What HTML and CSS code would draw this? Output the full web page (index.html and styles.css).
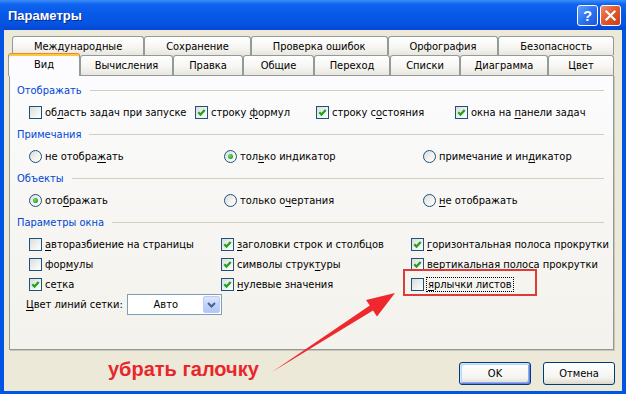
FILE: index.html
```html
<!DOCTYPE html>
<html lang="ru">
<head>
    <meta charset="UTF-8">
    <title>Параметры</title>
    <link rel="stylesheet" href="styles.css">
</head>
<body>
    <div class="window">
        <!-- Заголовок окна -->
        <div class="titlebar">
            <span class="title">Параметры</span>
            <div class="caption-buttons">
                <span class="cap-btn help">?</span>
                <span class="cap-btn close">
                    <svg viewBox="0 0 21 21" width="21" height="21"><path d="M6 6 L15 15 M15 6 L6 15" stroke="#fff" stroke-width="2.4" stroke-linecap="square"/></svg>
                </span>
            </div>
        </div>

        <div class="client">
            <!-- Вкладки -->
            <div class="tabs">
                <div class="tab-row back">
                    <span class="tab">Международные</span>
                    <span class="tab">Сохранение</span>
                    <span class="tab">Проверка ошибок</span>
                    <span class="tab">Орфография</span>
                    <span class="tab">Безопасность</span>
                </div>
                <div class="tab-row front">
                    <span class="tab active">Вид</span>
                    <span class="tab">Вычисления</span>
                    <span class="tab">Правка</span>
                    <span class="tab">Общие</span>
                    <span class="tab">Переход</span>
                    <span class="tab">Списки</span>
                    <span class="tab">Диаграмма</span>
                    <span class="tab">Цвет</span>
                </div>
            </div>

            <div class="panel">
                <div class="group-title"><span>Отображать</span></div>
                <div class="row cols-show">
                    <label class="opt"><span class="cb"></span><span>об<u>л</u>асть задач при запуске</span></label>
                    <label class="opt"><span class="cb on"><svg viewBox="0 0 11 11"><polyline points="2.3,5.2 4.5,7.6 8.7,3"/></svg></span><span>строку <u>ф</u>ормул</span></label>
                    <label class="opt"><span class="cb on"><svg viewBox="0 0 11 11"><polyline points="2.3,5.2 4.5,7.6 8.7,3"/></svg></span><span>строку с<u>о</u>стояния</span></label>
                    <label class="opt"><span class="cb on"><svg viewBox="0 0 11 11"><polyline points="2.3,5.2 4.5,7.6 8.7,3"/></svg></span><span>окна на <u>п</u>анели задач</span></label>
                </div>

                <div class="group-title"><span>Примечания</span></div>
                <div class="row cols-radio">
                    <label class="opt"><span class="rb"></span><span>не отобра<u>ж</u>ать</span></label>
                    <label class="opt"><span class="rb on"></span><span>тол<u>ь</u>ко индикатор</span></label>
                    <label class="opt"><span class="rb"></span><span>примечание и ин<u>д</u>икатор</span></label>
                </div>

                <div class="group-title"><span>Объекты</span></div>
                <div class="row cols-radio">
                    <label class="opt"><span class="rb on"></span><span>ото<u>б</u>ражать</span></label>
                    <label class="opt"><span class="rb"></span><span>только о<u>ч</u>ертания</span></label>
                    <label class="opt"><span class="rb"></span><span><u>н</u>е отображать</span></label>
                </div>

                <div class="group-title"><span>Параметры окна</span></div>
                <div class="grid cols-window">
                    <label class="opt"><span class="cb"></span><span><u>а</u>вторазбиение на страницы</span></label>
                    <label class="opt"><span class="cb on"><svg viewBox="0 0 11 11"><polyline points="2.3,5.2 4.5,7.6 8.7,3"/></svg></span><span><u>з</u>аголовки строк и столбцов</span></label>
                    <label class="opt"><span class="cb on"><svg viewBox="0 0 11 11"><polyline points="2.3,5.2 4.5,7.6 8.7,3"/></svg></span><span><u>г</u>оризонтальная полоса прокрутки</span></label>

                    <label class="opt"><span class="cb"></span><span>фор<u>м</u>улы</span></label>
                    <label class="opt"><span class="cb on"><svg viewBox="0 0 11 11"><polyline points="2.3,5.2 4.5,7.6 8.7,3"/></svg></span><span>символы струк<u>т</u>уры</span></label>
                    <label class="opt"><span class="cb on"><svg viewBox="0 0 11 11"><polyline points="2.3,5.2 4.5,7.6 8.7,3"/></svg></span><span><u>в</u>ертикальная полоса прокрутки</span></label>

                    <label class="opt"><span class="cb on"><svg viewBox="0 0 11 11"><polyline points="2.3,5.2 4.5,7.6 8.7,3"/></svg></span><span>се<u>т</u>ка</span></label>
                    <label class="opt"><span class="cb on"><svg viewBox="0 0 11 11"><polyline points="2.3,5.2 4.5,7.6 8.7,3"/></svg></span><span><u>н</u>улевые значения</span></label>
                    <label class="opt"><span class="cb"></span><span class="focus"><u>я</u>рлычки листов</span></label>
                </div>

                <div class="combo-row">
                    <span class="combo-label"><u>Ц</u>вет линий сетки:</span>
                    <div class="combo">
                        <span class="combo-text">Авто</span>
                        <span class="combo-btn">
                            <svg viewBox="0 0 15 17" width="15" height="17"><polyline points="4,7 7.5,10.5 11,7" fill="none" stroke="#4D6185" stroke-width="2"/></svg>
                        </span>
                    </div>
                </div>
            </div>

            <div class="footer">
                <span class="note">убрать галочку</span>
                <button class="btn default">OK</button>
                <button class="btn">Отмена</button>
            </div>
        </div>

        <!-- Пометки поверх окна -->
        <svg class="marks" viewBox="0 0 626 394" width="626" height="394">
            <rect x="404" y="270" width="132" height="25" fill="none" stroke="#DE3A3C" stroke-width="2"/>
            <polygon points="272,372 373,310.6 377,316.5 395,293 366,300 369.8,305.6" fill="#F0282D"/>
        </svg>
    </div>
</body>
</html>
```

FILE: styles.css
```css
* {
    margin: 0;
    padding: 0;
    box-sizing: border-box;
}

body {
    width: 626px;
    height: 394px;
    overflow: hidden;
    font-family: 'DejaVu Sans', sans-serif;
    font-stretch: condensed;
    font-size: 11px;
    color: #000000;
    background: #0055e5;
}

.window {
    position: relative;
    width: 626px;
    height: 394px;
    display: flex;
    flex-direction: column;
    background: #0055e5;
}

.titlebar {
    height: 30px;
    display: flex;
    align-items: center;
    justify-content: space-between;
    padding: 0 5px 0 8px;
    background: linear-gradient(180deg, #3d8ff8 0%, #0f64f0 14%, #0759e7 45%, #0553e1 80%, #0447d6 100%);
}

.title {
    font-family: 'Liberation Sans', sans-serif;
    font-stretch: normal;
    font-size: 13px;
    font-weight: 700;
    color: #ffffff;
    text-shadow: 1px 1px 0 #0a2a8a;
}

.caption-buttons {
    display: flex;
    gap: 2px;
}

.cap-btn {
    width: 21px;
    height: 21px;
    border: 1px solid #ffffff;
    border-radius: 3px;
    display: flex;
    align-items: center;
    justify-content: center;
}

.cap-btn.help {
    background: linear-gradient(135deg, #5fa2ff 0%, #2e72f2 50%, #1b58e0 100%);
    color: #ffffff;
    font-family: 'Liberation Sans', sans-serif;
    font-stretch: normal;
    font-weight: 700;
    font-size: 15px;
}

.cap-btn.close {
    background: linear-gradient(135deg, #f08a6a 0%, #e25a2e 45%, #c83e18 100%);
}

.cap-btn.close svg {
    width: 19px;
    height: 19px;
}

.client {
    flex: 1;
    margin: 0 4px 3px 4px;
    background: #ece9d8;
    display: flex;
    flex-direction: column;
}

.tabs {
    padding: 6px 8px 0 6px;
}

.tab-row {
    display: flex;
}

.tab-row.back {
    height: 19px;
    margin-left: 2px;
}

.tab-row.front {
    height: 20px;
}

.tab {
    flex: 1 1 auto;
    display: flex;
    align-items: center;
    justify-content: center;
    padding: 0 6px;
    white-space: nowrap;
    border: 1px solid #919b9c;
    border-bottom: none;
    border-radius: 3px 3px 0 0;
    background: linear-gradient(180deg, #ffffff 0%, #f7f6f2 55%, #e8e6dd 100%);
}

/* нижний ряд: ширины как у ярлыков в Windows */
.tab-row.front .tab { flex: none; padding: 0; }
.tab-row.front .tab:nth-child(2) { width: 93px; }
.tab-row.front .tab:nth-child(3) { width: 70px; }
.tab-row.front .tab:nth-child(4) { width: 71px; }
.tab-row.front .tab:nth-child(5) { width: 76px; }
.tab-row.front .tab:nth-child(6) { width: 70px; }
.tab-row.front .tab:nth-child(7) { width: 88px; }
.tab-row.front .tab:nth-child(8) { width: 66px; }

.tab-row.front .tab.active {
    position: relative;
    z-index: 2;
    width: 72px;
    margin: -2px 0 -1px -2px;
    padding-bottom: 2px;
    border-top: 1px solid #e68b2c;
    box-shadow: inset 0 2px 0 #ffc73c;
    background: #fcfcfe;
}

.panel {
    height: 275px;
    margin: 0 8px 0 5px;
    padding: 6px 9px 0 7px;
    border: 1px solid #919b9c;
    box-shadow: 1px 1px 0 #c9c6b8;
    background: linear-gradient(180deg, #fcfcfe 0%, #f6f5f1 60%, #f3f2ec 100%);
}

.group-title {
    height: 16px;
    display: flex;
    align-items: center;
    margin: 4px 0 4px 0;
    color: #0046d5;
}

.group-title:first-child {
    margin-top: 0;
}

.group-title::after {
    content: '';
    flex: 1;
    height: 1px;
    margin-left: 8px;
    background: #d0d0bf;
}

.row,
.grid {
    display: grid;
    padding-left: 12px;
}

.row {
    height: 20px;
}

.grid {
    grid-auto-rows: 20px;
}

.cols-show {
    grid-template-columns: 166px 121px 139px 1fr;
}

.cols-radio {
    grid-template-columns: 195px 199px 1fr;
}

.cols-window {
    grid-template-columns: 192px 190px 1fr;
}

.opt {
    display: flex;
    align-items: center;
    gap: 3px;
    white-space: nowrap;
}

.opt u,
.combo-label u {
    text-underline-offset: 2px;
}

.cb {
    flex: none;
    width: 13px;
    height: 13px;
    border: 1px solid #1c5180;
    background: linear-gradient(135deg, #dcdcd7 0%, #f2f2ef 60%, #ffffff 100%);
    display: flex;
    align-items: center;
    justify-content: center;
}

.cb svg {
    width: 11px;
    height: 11px;
}

.cb polyline {
    fill: none;
    stroke: #21a121;
    stroke-width: 2.2;
}

.rb {
    flex: none;
    position: relative;
    width: 13px;
    height: 13px;
    border: 1px solid #1c5180;
    border-radius: 50%;
    background: linear-gradient(135deg, #dcdcd7 0%, #f4f4f1 60%, #ffffff 100%);
}

.rb.on::after {
    content: '';
    position: absolute;
    left: 3px;
    top: 3px;
    width: 5px;
    height: 5px;
    border-radius: 50%;
    background: radial-gradient(circle at 40% 40%, #7fe07f 0%, #2fb32f 50%, #1c931c 100%);
}

.focus {
    outline: 1px dotted #000000;
    padding: 0 1px;
}

.combo-row {
    display: flex;
    align-items: center;
    gap: 4px;
    padding-left: 9px;
    height: 21px;
}

.combo {
    width: 95px;
    height: 21px;
    border: 1px solid #7f9db9;
    background: #ffffff;
    display: flex;
    align-items: stretch;
}

.combo-text {
    flex: 1;
    display: flex;
    align-items: center;
    justify-content: center;
    padding-left: 2px;
}

.combo-btn {
    width: 17px;
    margin: 1px;
    border-radius: 2px;
    border: 1px solid #b9cbf3;
    background: linear-gradient(180deg, #dce6fd 0%, #c3d3fd 50%, #b1c6f8 100%);
    display: flex;
    align-items: center;
    justify-content: center;
}

.footer {
    display: flex;
    align-items: center;
    padding: 12px 7px 0 0;
}

.note {
    margin: -8px auto 0 104px;
    font-family: 'Liberation Sans', sans-serif;
    font-stretch: normal;
    font-size: 20px;
    font-weight: 700;
    color: #e8262c;
}

.btn {
    width: 72px;
    height: 23px;
    margin-left: 12px;
    border: 1px solid #003c74;
    border-radius: 3px;
    font-family: inherit;
    font-stretch: condensed;
    font-size: 11px;
    color: #000000;
    background: linear-gradient(180deg, #ffffff 0%, #f4f4f0 70%, #dcd8cc 100%);
}

.btn.default {
    box-shadow: inset 1px 1px 0 #cee7ff, inset -1px -1px 0 #6982ee, inset 2px 2px 0 #bcd4f6, inset -2px -2px 0 #89ade4;
}

.marks {
    position: absolute;
    left: 0;
    top: 0;
    pointer-events: none;
}
```
